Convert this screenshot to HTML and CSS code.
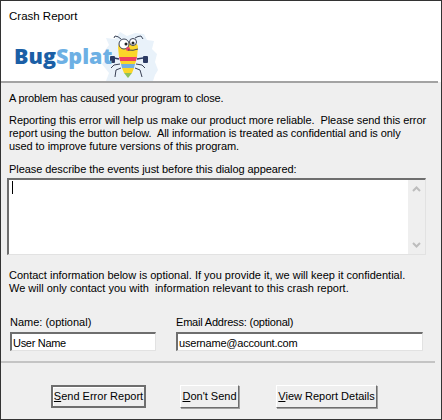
FILE: index.html
```html
<!DOCTYPE html>
<html lang="en">
<head>
<meta charset="utf-8">
<title>Crash Report</title>
<link rel="stylesheet" href="styles.css">
</head>
<body>
<div class="dialog">
  <header class="banner">
    <div class="title">Crash Report</div>
    <div class="brand">
      <span class="wordmark"><span class="bug">Bug</span><span class="splat">Splat</span></span>
      <svg class="mascot" width="62" height="50" viewBox="0 0 62 50" aria-hidden="true">
        <path d="M2 33l6-7-2-8 3-4-3-7 9 1 5-7 7 4 8-3 9 1 3 6 7 1-2 8 5 5-2 8 3 8-3 5-2 6H6l3-8z" fill="#e9f2fa"/>
        <path d="M21 8q-3-3-6-3l-1 2M35 7q3-2 6-2l2 3" fill="none" stroke="#3a4256" stroke-width="1"/>
        <path d="M19 28l-5-1M37 28l6-1" fill="none" stroke="#2b3a63" stroke-width="1.500"/>
        <rect x="10" y="25" width="5" height="7" rx="1" fill="#2b3a63"/>
        <rect x="43" y="25" width="5" height="7" rx="1" fill="#2b3a63"/>
        <path d="M20 33l-6 1-3 3M21 37l-5 2-1 7M36 33l6 1 3 3M35 37l5 2 2 7" fill="none" stroke="#3a4256" stroke-width="1"/>
        <path d="M18 16q0-5 10-5t10 5l-1 10H19z" fill="#fbd629"/>
        <path d="M19 26h18l-1 4H20z" fill="#ee4060"/>
        <path d="M20 30h16l-1 3H21z" fill="#fbd629"/>
        <path d="M21 33h14l-1 4H22z" fill="#74aee0"/>
        <path d="M22 37h12l-2 5h-8z" fill="#fbd629"/>
        <path d="M24 42h8l-4 5z" fill="#8fc15a"/>
        <circle cx="24" cy="13" r="5" fill="#fff" stroke="#3a4256"/>
        <circle cx="33" cy="11" r="3.500" fill="#fff" stroke="#3a4256"/>
        <circle cx="26" cy="13" r="1.500" fill="#222"/>
        <circle cx="33" cy="12" r="1.500" fill="#222"/>
        <circle cx="28" cy="18" r="2" fill="#ee4060"/>
        <path d="M28 19q5 1 10-1" fill="none" stroke="#3a4256" stroke-width="1"/>
      </svg>
    </div>
    <div class="rule"></div>
  </header>
  <main class="content">
    <p class="lead">A problem has caused your program to close.</p>
    <p class="para">Reporting this error will help us make our product more reliable.&nbsp; Please send this error<br>report using the button below.&nbsp; All information is treated as confidential and is only<br>used to improve future versions of this program.</p>
    <p class="prompt">Please describe the events just before this dialog appeared:</p>
    <div class="memo">
      <div class="memo-text"><span class="caret"></span></div>
      <div class="scroll">
        <svg width="9" height="6" viewBox="0 0 9 6" aria-hidden="true"><path d="M1 5l3.500-3.500L8 5" fill="none" stroke="#bdbdbd" stroke-width="2"/></svg>
        <svg width="9" height="6" viewBox="0 0 9 6" aria-hidden="true"><path d="M1 1l3.500 3.500L8 1" fill="none" stroke="#bdbdbd" stroke-width="2"/></svg>
      </div>
    </div>
    <p class="contact">Contact information below is optional. If you provide it, we will keep it confidential.<br>We will only contact you with&nbsp; information relevant to this crash report.</p>
    <div class="fields">
      <div class="field name">
        <label class="label">Name: (optional)</label>
        <div class="input name-input">User Name</div>
      </div>
      <div class="field email">
        <label class="label email-label">Email Address: (optional)</label>
        <div class="input email-input">username@account.com</div>
      </div>
    </div>
  </main>
  <footer class="actions">
    <button class="btn send default"><u>S</u>end Error Report</button>
    <button class="btn dont"><u>D</u>on't Send</button>
    <button class="btn details"><u>V</u>iew Report Details</button>
  </footer>
</div>
</body>
</html>
```
FILE: styles.css
```css
* { box-sizing: border-box; }
html, body { margin: 0; height: 100%; }
body { background: #efefef; font: 11px/13px "Liberation Sans", Arial, sans-serif; color: #000; }
.dialog { width: 442px; height: 420px; border: 1px solid #333; background: #efefef; display: flex; flex-direction: column; overflow: hidden; }
.banner { height: 81px; background: #fff; padding-top: 9px; flex: none; display: flex; flex-direction: column; }
.title { height: 13px; padding-left: 8px; font-size: 11.500px; }
.brand { display: flex; align-items: flex-start; margin: 8px 0 0 13px; height: 50px; flex: none; }
.wordmark { position: relative; font: 800 21.500px/30px "Open Sans", sans-serif; width: 86px; margin-top: 10px; white-space: nowrap; }
.bug { color: #1b5fa6; }
.splat { color: #6db0e4; }
.rule { height: 2px; margin: auto 3px 0 0; background: #a3a3a3; flex: none; }
.content { padding: 10px 0 0 8px; flex: none; }
.content p { margin: 0; white-space: nowrap; }
.content .lead { letter-spacing: -0.160px; }
.content .para { margin-top: 9px; letter-spacing: -0.060px; }
.content .prompt { margin-top: 10px; letter-spacing: -0.070px; }
.memo { margin: 2px 0 0 -2px; width: 419px; height: 77px; display: flex; background: #fff; border: 1px solid; border-color: #6e6e6e #e2e2e2 #e2e2e2 #6e6e6e; border-top-width: 2px; border-left-width: 2px; }
.memo-text { flex: 1; padding: 1px 3px; }
.caret { display: block; width: 1px; height: 13px; background: #000; }
.scroll { width: 17px; background: #efefef; display: flex; flex-direction: column; justify-content: space-between; align-items: center; padding: 6px 0; }
.content .contact { margin-top: 14px; }
.fields { display: flex; gap: 20px; margin-top: 21px; }
.field { display: flex; flex-direction: column; gap: 3px; }
.name { margin-left: 1px; width: 146px; }
.email { width: 247px; }
.label { height: 13px; }
.email-label { letter-spacing: -0.200px; }
.input { height: 19px; background: #fff; border: 1px solid; border-color: #6e6e6e #e2e2e2 #e2e2e2 #6e6e6e; border-top-width: 2px; border-left-width: 2px; padding: 3px 1px 0; white-space: nowrap; }
.name-input { letter-spacing: -0.300px; }
.email-input { letter-spacing: -0.200px; }
.actions { margin: 10px 6px 0 0; border-top: 2px solid #c4c4c4; padding-top: 22px; display: flex; }
.btn { height: 23px; padding: 0; font: inherit; color: #000; background: #efefef; border: 1px solid; border-color: #fff #6e6e6e #6e6e6e #fff; box-shadow: 1px 1px 0 #a0a0a0; white-space: nowrap; }
.default { border: 2px solid #6e6e6e; box-shadow: inset 1px 1px 0 #fff; }
.send { width: 95px; margin-left: 50px; }
.dont { width: 59px; margin-left: 34px; }
.details { width: 101px; margin-left: 37px; }
```
